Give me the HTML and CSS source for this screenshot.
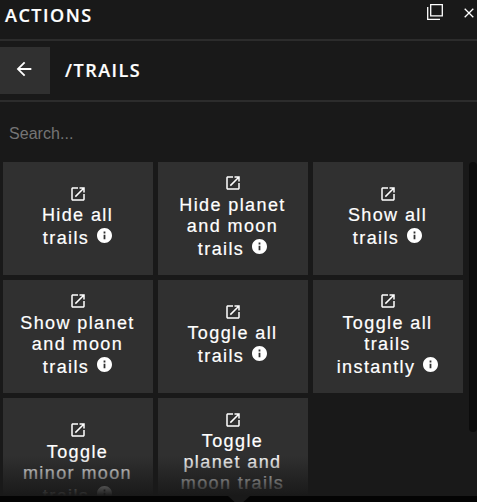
FILE: index.html
```
<!DOCTYPE html>
<html lang="en">
<head>
<meta charset="utf-8">
<title>Actions</title>
<link rel="stylesheet" href="styles.css">
</head>
<body>
<svg class="defs" width="0" height="0">
  <symbol id="launch" viewBox="0 0 24 24"><path d="M19 19H5V5h7V3H5c-1.11 0-2 .9-2 2v14c0 1.1.89 2 2 2h14c1.1 0 2-.9 2-2v-7h-2v7zM14 3v2h3.59l-9.83 9.83 1.41 1.41L19 6.41V10h2V3h-7z"/></symbol>
  <symbol id="info" viewBox="2 2 20 20"><path d="M12 2C6.48 2 2 6.48 2 12s4.480 10 10 10 10-4.480 10-10S17.520 2 12 2zm1.200 15h-2.400v-6h2.400v6zm0-7.700h-2.400V6.800h2.400v2.500z"/></symbol>
</svg>
<main class="panel">
  <header class="titlebar">
    <h1 class="title">ACTIONS</h1>
    <svg class="detach" viewBox="0 0 16 16"><path d="M3.700.700h11.600v11.100H3.700zM.700 3v12.300H13"/></svg>
    <svg class="close" viewBox="0 0 10 10"><path d="M.7.700l8.600 8.600M9.300.700L.700 9.300"/></svg>
  </header>
  <nav class="path">
    <button class="back"><svg viewBox="0 0 24 24"><path d="M20 11H7.830l5.590-5.590L12 4l-8 8 8 8 1.410-1.410L7.830 13H20v-2z"/></svg></button>
    <h2 class="title">/TRAILS</h2>
  </nav>
  <input class="search" placeholder="Search...">
  <section class="scroller">
    <div class="grid">
      <div class="tile"><svg class="launch"><use href="#launch"/></svg><span>Hide all</span><span class="last">trails <svg class="info"><use href="#info"/></svg></span></div>
      <div class="tile"><svg class="launch"><use href="#launch"/></svg><span>Hide planet</span><span>and moon</span><span class="last">trails <svg class="info"><use href="#info"/></svg></span></div>
      <div class="tile"><svg class="launch"><use href="#launch"/></svg><span>Show all</span><span class="last">trails <svg class="info"><use href="#info"/></svg></span></div>
      <div class="tile"><svg class="launch"><use href="#launch"/></svg><span>Show planet</span><span>and moon</span><span class="last">trails <svg class="info"><use href="#info"/></svg></span></div>
      <div class="tile"><svg class="launch"><use href="#launch"/></svg><span>Toggle all</span><span class="last">trails <svg class="info"><use href="#info"/></svg></span></div>
      <div class="tile"><svg class="launch"><use href="#launch"/></svg><span>Toggle all</span><span>trails</span><span class="last">instantly <svg class="info"><use href="#info"/></svg></span></div>
      <div class="tile"><svg class="launch"><use href="#launch"/></svg><span>Toggle</span><span>minor moon</span><span class="last">trails <svg class="info"><use href="#info"/></svg></span></div>
      <div class="tile"><svg class="launch"><use href="#launch"/></svg><span>Toggle</span><span>planet and</span><span>moon trails</span><span class="last"><svg class="info"><use href="#info"/></svg></span></div>
    </div>
    <div class="thumb"></div>
    <div class="fade"></div>
  </section>
</main>
<footer class="below"><div class="pointer"></div></footer>
</body>
</html>
```
FILE: styles.css
```
* { box-sizing: border-box; }
body {
  margin: 0;
  height: 502px;
  overflow: hidden;
  background: #040404;
  color: #fff;
  font-family: "Liberation Sans", Arial, sans-serif;
}
.defs { position: absolute; }
svg { display: block; fill: #fff; flex: none; }
.panel {
  height: 496px;
  background: #191919;
  display: flex;
  flex-direction: column;
}
.title {
  margin: 0;
  font: 600 18px/24px "Open Sans", "Noto Sans", sans-serif;
  letter-spacing: 1.5px;
  -webkit-text-stroke: .2px #fff;
}
.titlebar {
  height: 41px;
  flex: none;
  display: flex;
  align-items: flex-start;
  padding: 4px 3px 0 5px;
  border-bottom: 2px solid #2c2c2c;
}
.titlebar .title { flex: 1; margin-top: -1px; }
.detach, .close { fill: none; stroke: #fff; stroke-width: 1.3; }
.detach { width: 16px; height: 16px; }
.close { width: 10px; height: 10px; margin: 4px 0 0 21px; }
.path {
  height: 61px;
  flex: none;
  display: flex;
  align-items: center;
  gap: 15px;
  border-bottom: 2px solid #2c2c2c;
}
.path .title { margin-top: -1px; }
.back {
  width: 50px;
  height: 47px;
  padding: 0 2px 3px 0;
  border: 0;
  background: #303030;
  display: grid;
  place-items: center;
}
.back svg { width: 22px; height: 22px; }
.search {
  height: 60px;
  flex: none;
  padding: 3px 9px 0;
  border: 0;
  outline: 0;
  background: transparent;
  font: 16px "Liberation Sans", Arial, sans-serif;
  letter-spacing: .05px;
}
.search::placeholder { color: #757575; }
.scroller {
  position: relative;
  flex: 1;
  min-height: 0;
  overflow: hidden;
  display: flex;
  gap: 6px;
  padding-left: 3px;
}
.grid {
  display: grid;
  grid-template-columns: repeat(3, 150px);
  grid-template-rows: 113px 113px 135px;
  gap: 5px;
}
.tile {
  background: #303030;
  display: flex;
  flex-direction: column;
  align-items: center;
  justify-content: center;
  padding-bottom: 4px;
  font-size: 18px;
  line-height: 21px;
  letter-spacing: 1.4px;
  white-space: nowrap;
  -webkit-text-stroke: .2px #fff;
}
.tile span { padding-right: 1px; }
.launch { width: 18px; height: 18px; margin: -.5px 0 2.5px; }
.tile .last { height: 22px; line-height: 25px; padding-right: 1px; }
.info { display: inline-block; width: 15px; height: 15px; margin-left: 1.5px; vertical-align: 1px; }
.thumb {
  width: 8px;
  height: 270px;
  border-radius: 4px;
  background: #0c0c0c;
}
.fade {
  position: absolute;
  inset: auto 0 0;
  height: 40px;
  background: linear-gradient(rgba(25, 25, 25, 0), #191919);
}
.below { height: 6px; background: #040404; }
.pointer {
  width: 22px;
  height: 10px;
  margin-left: 228px;
  background: #191919;
  clip-path: polygon(0 0, 100% 0, 50% 100%);
}
```
